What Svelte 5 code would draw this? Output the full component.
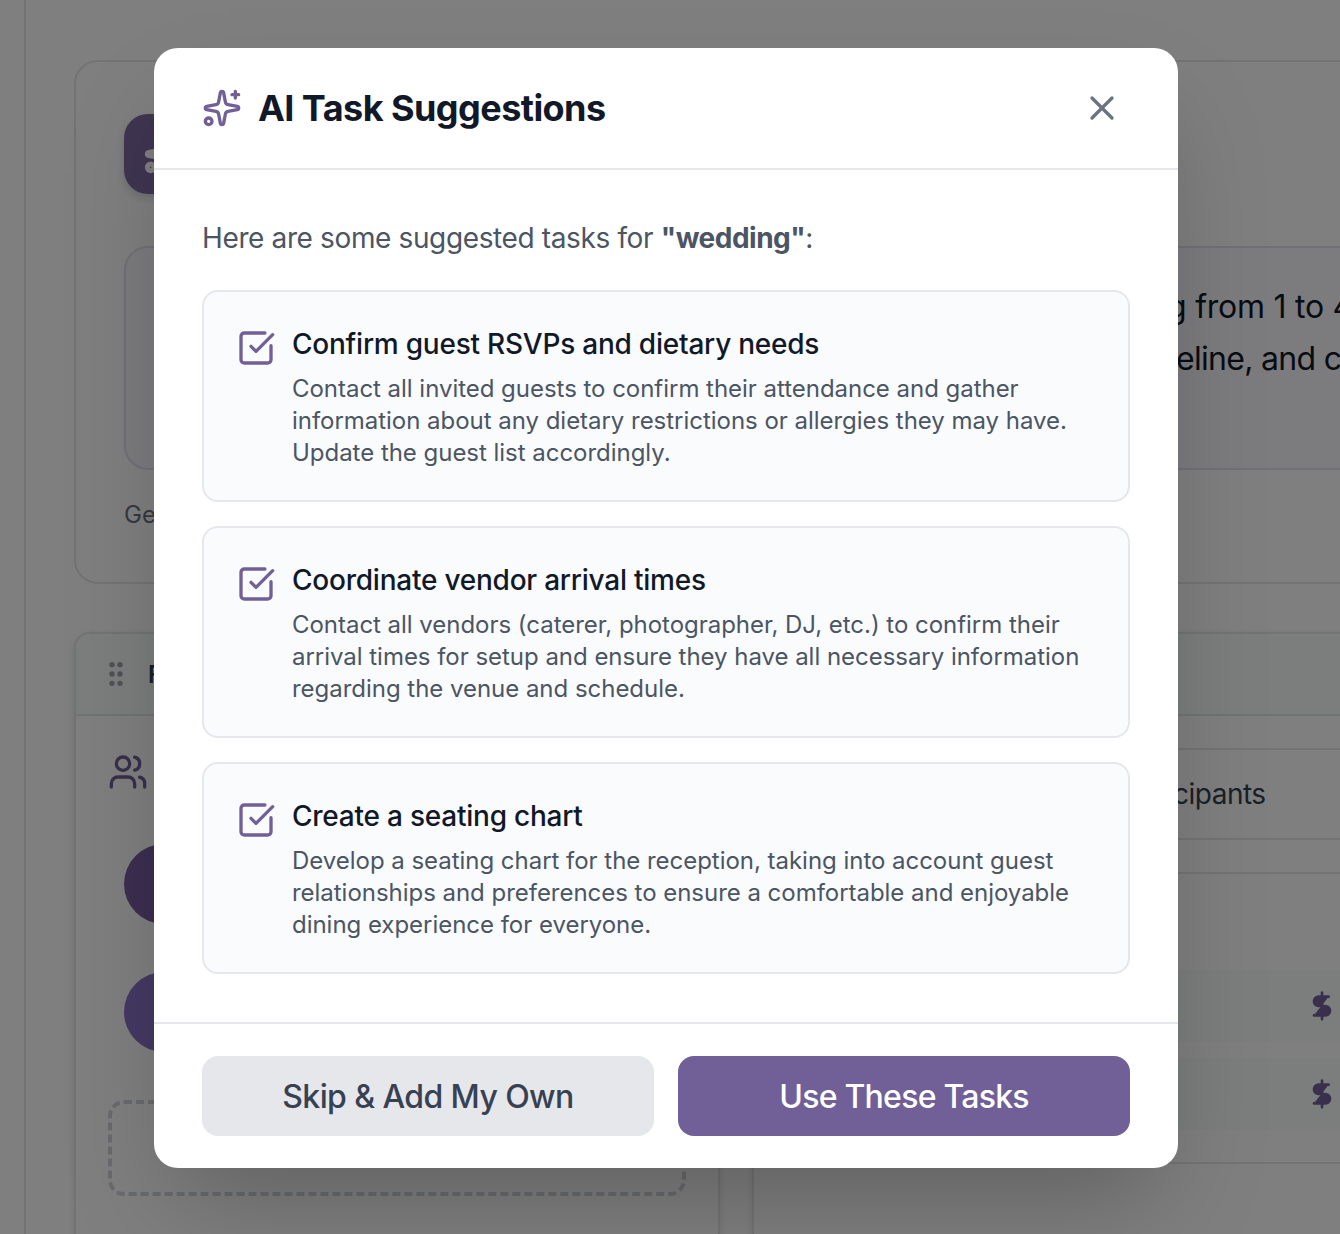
<script>
  const tasks = [
    {
      title: 'Confirm guest RSVPs and dietary needs',
      text: 'Contact all invited guests to confirm their attendance and gather information about any dietary restrictions or allergies they may have. Update the guest list accordingly.'
    },
    {
      title: 'Coordinate vendor arrival times',
      text: 'Contact all vendors (caterer, photographer, DJ, etc.) to confirm their arrival times for setup and ensure they have all necessary information regarding the venue and schedule.'
    },
    {
      title: 'Create a seating chart',
      text: 'Develop a seating chart for the reception, taking into account guest relationships and preferences to ensure a comfortable and enjoyable dining experience for everyone.'
    }
  ];
</script>

{#snippet sparkles()}
  <path class="star" d="M11.017 2.814a1 1 0 0 1 1.966 0l1.051 5.558a2 2 0 0 0 1.594 1.594l5.558 1.051a1 1 0 0 1 0 1.966l-5.558 1.051a2 2 0 0 0-1.594 1.594l-1.051 5.558a1 1 0 0 1-1.966 0l-1.051-5.558a2 2 0 0 0-1.594-1.594l-5.558-1.051a1 1 0 0 1 0-1.966l5.558-1.051a2 2 0 0 0 1.594-1.594z" />
  <path d="M20 2v4M22 4h-4" />
  <circle cx="4" cy="20" r="2" />
{/snippet}

<div class="screen">
  <main class="page" aria-hidden="true">
    <section class="hero">
      <div class="hero-head">
        <div class="tile">
          <svg class="icon bold" viewBox="0 0 24 24">{@render sparkles()}</svg>
        </div>
      </div>
      <div class="prompt">
        <p class="line-a">g from 1 to 4</p>
        <p class="line-b">eline, and c</p>
      </div>
      <p class="hint">Ge</p>
    </section>

    <div class="widgets">
      <section class="widget people">
        <header class="bar">
          <svg class="icon grip" viewBox="0 0 24 24">
            <circle cx="9" cy="12" r="1" /><circle cx="9" cy="5" r="1" /><circle cx="9" cy="19" r="1" />
            <circle cx="15" cy="12" r="1" /><circle cx="15" cy="5" r="1" /><circle cx="15" cy="19" r="1" />
          </svg>
          <span>F</span>
        </header>
        <div class="content">
          <div class="group">
            <svg class="icon" viewBox="0 0 24 24">
              <path d="M16 21v-2a4 4 0 0 0-4-4H6a4 4 0 0 0-4 4v2M16 3.128a4 4 0 0 1 0 7.744M22 21v-2a4 4 0 0 0-3-3.87" />
              <circle cx="9" cy="7" r="4" />
            </svg>
          </div>
          <div class="person"><div class="avatar"></div></div>
          <div class="person"><div class="avatar light"></div></div>
          <div class="add"></div>
        </div>
      </section>

      <section class="widget costs">
        <header class="bar"></header>
        <div class="content">
          <div class="field">cipants</div>
          <div class="panel">
            {#each [1, 2] as row (row)}
              <div class="cost">
                <svg class="icon dollar" viewBox="0 0 24 24">
                  <path d="M12 2v20M17 5H9.5a3.5 3.5 0 0 0 0 7h5a3.5 3.5 0 0 1 0 7H6" />
                </svg>
              </div>
            {/each}
          </div>
        </div>
      </section>
    </div>
  </main>

  <div class="overlay">
    <div class="modal" role="dialog" aria-modal="true" aria-labelledby="title">
      <header class="head">
        <svg class="icon" viewBox="0 0 24 24">{@render sparkles()}</svg>
        <h2 id="title">AI Task Suggestions</h2>
        <button class="close" aria-label="Close">
          <svg class="icon" viewBox="0 0 24 24"><path d="M18 6 6 18M6 6l12 12" /></svg>
        </button>
      </header>

      <div class="body">
        <p class="intro">Here are some suggested tasks for <strong>"wedding"</strong>:</p>
        <div class="list">
          {#each tasks as task (task.title)}
            <article class="task">
              <svg class="icon" viewBox="0 0 24 24">
                <path d="M21 10.656V19a2 2 0 0 1-2 2H5a2 2 0 0 1-2-2V5a2 2 0 0 1 2-2h12.344" />
                <path d="m9 11 3 3L22 4" />
              </svg>
              <div>
                <h3>{task.title}</h3>
                <p>{task.text}</p>
              </div>
            </article>
          {/each}
        </div>
      </div>

      <footer class="foot">
        <button class="btn skip">Skip &amp; Add My Own</button>
        <button class="btn use">Use These Tasks</button>
      </footer>
    </div>
  </div>
</div>

<style>
  :global(body) {
    margin: 0;
    overflow: hidden;
    background: #fff;
  }

  .screen,
  .screen * {
    box-sizing: border-box;
  }

  .screen {
    position: relative;
    width: 1340px;
    height: 1234px;
    overflow: hidden;
    font-family: Inter, 'Liberation Sans', sans-serif;
    color: #111827;
  }

  p, h2, h3 {
    margin: 0;
  }

  button {
    border: 0;
    font-family: inherit;
  }

  .icon {
    display: block;
    flex: none;
    width: 40px;
    height: 40px;
    fill: none;
    stroke: #716098;
    stroke-width: 2;
    stroke-linecap: round;
    stroke-linejoin: round;
  }

  /* Page behind the dialog */
  .page {
    width: 1700px;
    height: 1400px;
    margin-left: 24px;
    padding: 60px 48px;
    border-left: 2px solid #e5e7eb;
  }

  .hero {
    height: 524px;
    padding: 48px;
    border: 2px solid #e5e7eb;
    border-radius: 24px;
  }

  .hero-head {
    display: flex;
    align-items: center;
    height: 88px;
    margin-bottom: 48px;
  }

  .tile {
    display: grid;
    place-items: center;
    width: 80px;
    height: 80px;
    border-radius: 24px;
    background: #7f6ba5;
    box-shadow: 0 4px 8px rgba(0, 0, 0, 0.14);
  }

  .bold {
    stroke: #fff;
    stroke-width: 3;
  }

  .bold .star {
    fill: #fff;
  }

  .prompt {
    height: 224px;
    padding: 33px 0 31px;
    border: 2px solid #e1e1ec;
    border-radius: 24px;
    background: #f8f8fc;
    font-size: 32px;
    line-height: 52px;
    white-space: nowrap;
  }

  .line-a {
    padding-left: 1041px;
    letter-spacing: -0.25px;
  }

  .line-b {
    padding-left: 1050px;
    letter-spacing: -0.7px;
  }

  .hint {
    margin-top: 25px;
    font-size: 24px;
    line-height: 40px;
    color: #6b7280;
  }

  .widgets {
    display: flex;
    gap: 32px;
    margin-top: 48px;
  }

  .widget {
    height: 700px;
    border: 2px solid #e5e7eb;
    border-radius: 16px;
    background: #fff;
    box-shadow: 0 2px 6px rgba(0, 0, 0, 0.12);
  }

  .people {
    width: 646px;
  }

  .costs {
    width: 900px;
  }

  .bar {
    display: flex;
    align-items: center;
    gap: 16px;
    height: 82px;
    padding: 0 24px;
    border-bottom: 2px solid #e5e7eb;
    border-radius: 14px 14px 0 0;
    background: #f9fafb;
    font-size: 24px;
    font-weight: 600;
    color: #374151;
  }

  .grip {
    width: 32px;
    height: 32px;
    stroke: #9ca3af;
  }

  .content {
    padding: 32px;
  }

  .group {
    display: flex;
    align-items: center;
    height: 48px;
    margin-bottom: 32px;
  }

  .person {
    margin-bottom: 16px;
    padding: 16px;
  }

  .avatar {
    width: 80px;
    height: 80px;
    border-radius: 50%;
    background: #785da2;
  }

  .avatar.light {
    background: #8b72c8;
  }

  .add {
    height: 96px;
    margin-top: 32px;
    border: 4px dashed #d1d5db;
    border-radius: 16px;
  }

  .field {
    display: flex;
    align-items: center;
    height: 92px;
    margin-bottom: 32px;
    padding-left: 385px;
    border: 2px solid #e5e7eb;
    border-radius: 16px;
    font-size: 28px;
    letter-spacing: -0.5px;
    color: #374151;
  }

  .panel {
    display: flex;
    flex-direction: column;
    justify-content: flex-end;
    gap: 16px;
    height: 292px;
    padding: 32px;
    border: 2px solid #e5e7eb;
    border-radius: 16px;
  }

  .cost {
    display: flex;
    align-items: center;
    height: 72px;
    padding-left: 486px;
    border-radius: 12px;
    background: #f9fafb;
  }

  .dollar {
    width: 32px;
    height: 32px;
    fill: #716098;
  }

  /* Dialog */
  .overlay {
    position: absolute;
    inset: 0;
    padding: 48px 162px 0 154px;
    background: rgba(0, 0, 0, 0.5);
  }

  .modal {
    width: 1024px;
    border-radius: 24px;
    background: #fff;
    box-shadow: 0 50px 100px -24px rgba(0, 0, 0, 0.25);
  }

  .head {
    display: flex;
    align-items: center;
    gap: 16px;
    padding: 32px 48px;
    border-bottom: 2px solid #e5e7eb;
  }

  h2 {
    flex: 1;
    font-size: 36px;
    font-weight: 700;
    line-height: 56px;
    letter-spacing: -0.55px;
  }

  .close {
    padding: 8px;
    background: none;
  }

  .close .icon {
    stroke: #6b7280;
  }

  .body {
    padding: 48px;
  }

  .intro {
    margin-bottom: 32px;
    font-size: 28px;
    line-height: 40px;
    letter-spacing: -0.37px;
    color: #4b5563;
  }

  strong {
    font-weight: 700;
    letter-spacing: -0.5px;
  }

  .list {
    display: flex;
    flex-direction: column;
    gap: 24px;
  }

  .task {
    display: flex;
    gap: 16px;
    height: 212px;
    padding: 32px;
    border: 2px solid #e5e7eb;
    border-radius: 16px;
    background: #fafbfd;
  }

  .task .icon {
    margin-top: 4px;
  }

  h3 {
    margin-bottom: 9px;
    font-size: 28px;
    font-weight: 500;
    line-height: 40px;
    letter-spacing: -0.23px;
  }

  .task p {
    font-size: 24px;
    line-height: 32px;
    letter-spacing: -0.03px;
    color: #4b5563;
  }

  .foot {
    display: flex;
    gap: 24px;
    padding: 32px 48px;
    border-top: 2px solid #e5e7eb;
  }

  .btn {
    flex: 1;
    height: 80px;
    padding: 1px 0 0;
    border-radius: 16px;
    font-size: 32px;
    font-weight: 500;
    letter-spacing: -0.6px;
  }

  .skip {
    background: #e5e7eb;
    color: #374151;
  }

  .use {
    background: #716098;
    color: #fff;
    letter-spacing: -0.75px;
  }
</style>
